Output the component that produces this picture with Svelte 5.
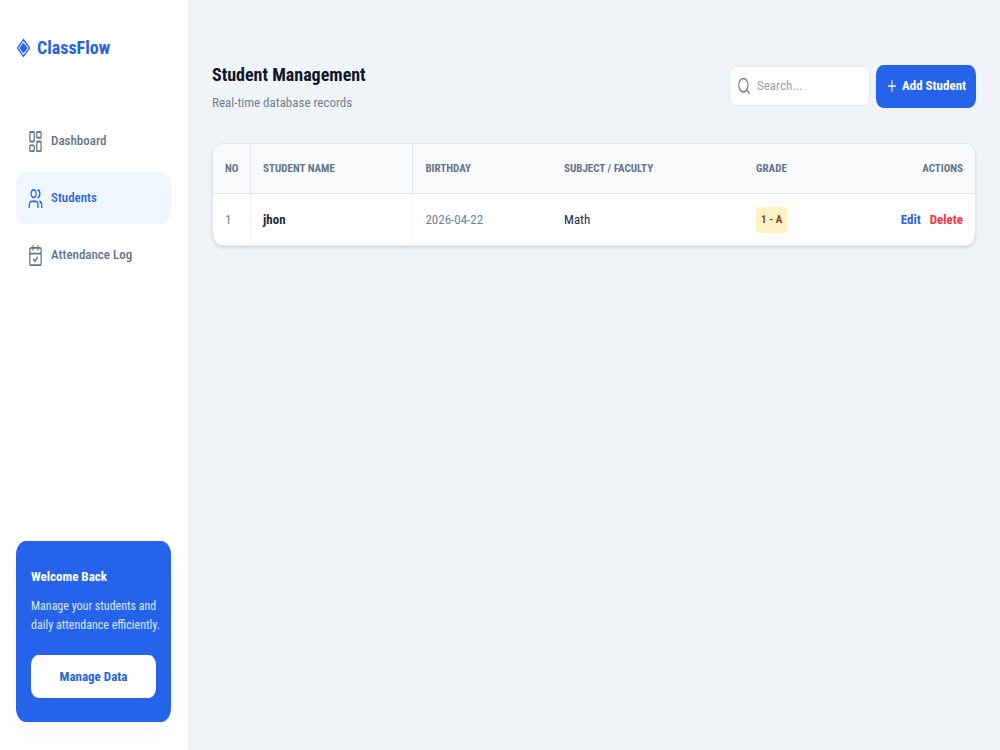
<script lang="ts">
  type Student = {
    id: number;
    name: string;
    birthday: string;
    subject: string;
    grade: string;
  };

  const navItems = [
    { id: 'dashboard', label: 'Dashboard' },
    { id: 'students', label: 'Students' },
    { id: 'attendance', label: 'Attendance Log' }
  ];

  let students: Student[] = [
    { id: 1, name: 'jhon', birthday: '2026-04-22', subject: 'Math', grade: '1 - A' }
  ];

  let current = 'students';
  let search = '';

  $: filtered = students.filter(s => s.name.toLowerCase().includes(search.toLowerCase()));

  function removeStudent(id: number) {
    students = students.filter(s => s.id !== id);
  }
</script>

<div class="layout">
  <aside class="sidebar">
    <div class="brand">
      <svg class="brand-icon" viewBox="0 0 24 24" preserveAspectRatio="none" aria-hidden="true">
        <path d="M12 2 21.5 12 12 22 2.5 12Z" />
        <path d="M12 7 Q15 9 17 12 Q15 15 12 17 Q9 15 7 12 Q9 9 12 7Z" fill="currentColor" />
      </svg>
      <span>ClassFlow</span>
    </div>

    <nav>
      {#each navItems as item}
        <a
          href="#{item.id}"
          class="nav-link"
          class:active={current === item.id}
          on:click={() => (current = item.id)}
        >
          <svg class="nav-icon" viewBox="0 0 24 24" preserveAspectRatio="none" aria-hidden="true">
            {#if item.id === 'dashboard'}
              <rect x="3" y="2" width="7" height="10" rx="1" />
              <rect x="14" y="2" width="7" height="6" rx="1" />
              <rect x="14" y="12" width="7" height="10" rx="1" />
              <rect x="3" y="16" width="7" height="6" rx="1" />
            {:else if item.id === 'students'}
              <path d="M16 21v-2a4 4 0 0 0-4-4H6a4 4 0 0 0-4 4v2" />
              <circle cx="9" cy="7" r="4" />
              <path d="M22 21v-2a4 4 0 0 0-3-3.87" />
              <path d="M16 3.13a4 4 0 0 1 0 7.75" />
            {:else}
              <path d="M8 2v4M16 2v4M3 10h18" />
              <rect x="3" y="4" width="18" height="18" rx="2" />
              <path d="m9 16 2 2 4-4" />
            {/if}
          </svg>
          <span>{item.label}</span>
        </a>
      {/each}
    </nav>

    <div class="welcome">
      <h2>Welcome Back</h2>
      <p>Manage your students and<br />daily attendance efficiently.</p>
      <button class="manage-btn" type="button">Manage Data</button>
    </div>
  </aside>

  <main>
    <header>
      <div>
        <h1>Student Management</h1>
        <p class="subtitle">Real-time database records</p>
      </div>

      <div class="tools">
        <label class="search">
          <svg class="search-icon" viewBox="0 0 24 24" preserveAspectRatio="none" aria-hidden="true">
            <circle cx="11" cy="11" r="8" />
            <path d="m21 21-4.3-4.3" />
          </svg>
          <input type="text" placeholder="Search..." aria-label="Search students" bind:value={search} />
        </label>
        <button class="add-btn" type="button">
          <svg class="plus-icon" viewBox="0 0 24 24" preserveAspectRatio="none" aria-hidden="true">
            <path d="M5 12h14M12 5v14" />
          </svg>
          Add Student
        </button>
      </div>
    </header>

    <div class="table-card">
      <table>
        <thead>
          <tr>
            <th class="col-no ruled">No</th>
            <th class="col-name ruled">Student Name</th>
            <th class="col-birthday">Birthday</th>
            <th class="col-subject">Subject / Faculty</th>
            <th class="col-grade">Grade</th>
            <th class="actions">Actions</th>
          </tr>
        </thead>
        <tbody>
          {#each filtered as student, i (student.id)}
            <tr>
              <td class="muted ruled">{i + 1}</td>
              <td class="name ruled">{student.name}</td>
              <td class="muted">{student.birthday}</td>
              <td>{student.subject}</td>
              <td><span class="badge">{student.grade}</span></td>
              <td class="actions">
                <button class="edit" type="button">Edit</button>
                <button class="delete" type="button" on:click={() => removeStudent(student.id)}>Delete</button>
              </td>
            </tr>
          {/each}
        </tbody>
      </table>
    </div>
  </main>
</div>

<style>
  :global(body) {
    background: #f0f4f9;
  }

  .layout,
  .layout * {
    box-sizing: border-box;
  }

  .layout {
    display: flex;
    min-height: 100vh;
    font-family: 'Roboto Condensed', 'Liberation Sans Narrow', Roboto, sans-serif;
    font-size: 13px;
    line-height: 20px;
    color: #1e293b;
  }

  h1,
  h2,
  p {
    margin: 0;
  }

  button,
  input {
    font: inherit;
  }

  button {
    border: none;
    cursor: pointer;
  }

  svg {
    flex-shrink: 0;
    fill: none;
    stroke: currentColor;
    stroke-width: 2;
    stroke-linecap: round;
    stroke-linejoin: round;
  }

  .sidebar {
    display: flex;
    flex-direction: column;
    flex-shrink: 0;
    width: 188px;
    padding: 32px 17px 28px 16px;
    background: #ffffff;
  }

  .brand {
    display: flex;
    align-items: center;
    gap: 6px;
    height: 32px;
    margin-bottom: 51px;
    font-size: 18px;
    font-weight: 700;
    color: #2563eb;
  }

  .brand-icon {
    width: 15px;
    height: 20px;
    stroke-linejoin: miter;
  }

  nav {
    display: flex;
    flex-direction: column;
    gap: 5px;
  }

  .nav-link {
    display: flex;
    align-items: center;
    gap: 8px;
    height: 52px;
    padding: 0 12px;
    border-radius: 10px / 14px;
    font-weight: 500;
    color: #64748b;
    text-decoration: none;
  }

  .nav-link.active {
    background: #eff6ff;
    color: #2563eb;
  }

  .nav-icon {
    width: 15px;
    height: 23px;
  }

  .welcome {
    margin-top: auto;
    padding: 26px 15px 24px;
    border-radius: 10px / 14px;
    background: #2563eb;
    color: #ffffff;
    box-shadow: 0 10px 20px rgba(37, 99, 235, 0.06);
  }

  .welcome h2 {
    margin-bottom: 10px;
    font-size: 13px;
    font-weight: 700;
  }

  .welcome p {
    margin-bottom: 20px;
    font-size: 12px;
    line-height: 19px;
    color: #dbe6fd;
    white-space: nowrap;
  }

  .manage-btn {
    width: 100%;
    height: 43px;
    border-radius: 7px / 10px;
    background: #ffffff;
    font-weight: 700;
    color: #2563eb;
  }

  main {
    flex: 1;
    min-width: 0;
    padding: 59px 24px;
  }

  header {
    display: flex;
    justify-content: space-between;
    align-items: center;
    margin-bottom: 30px;
  }

  h1 {
    margin-bottom: 3px;
    font-size: 18px;
    line-height: 31px;
    color: #0f172a;
  }

  .subtitle {
    color: #718096;
  }

  .tools {
    display: flex;
    align-items: center;
    gap: 6px;
  }

  .search {
    display: flex;
    align-items: center;
    gap: 6px;
    width: 141px;
    height: 40px;
    padding: 0 7px;
    border: 1px solid #e2e8f0;
    border-radius: 6px / 9px;
    background: #ffffff;
    color: #718096;
  }

  .search input {
    width: 100%;
    min-width: 0;
    padding: 0;
    border: none;
    outline: none;
    background: transparent;
    color: #1e293b;
  }

  .search input::placeholder {
    color: #9ca3af;
  }

  .search-icon {
    width: 14px;
    height: 20px;
  }

  .add-btn {
    display: flex;
    align-items: center;
    justify-content: center;
    gap: 4px;
    width: 100px;
    height: 43px;
    padding: 0;
    border-radius: 7px / 10px;
    background: #2563eb;
    font-weight: 700;
    color: #ffffff;
    white-space: nowrap;
  }

  .plus-icon {
    width: 12px;
    height: 18px;
  }

  .table-card {
    overflow: hidden;
    border: 1px solid #e2e8f0;
    border-radius: 10px / 14px;
    background: #ffffff;
    box-shadow: 0 2px 3px rgba(15, 23, 42, 0.12);
  }

  table {
    width: 100%;
    table-layout: fixed;
    border-collapse: separate;
    border-spacing: 0;
  }

  th,
  td {
    height: 51px;
    padding: 0 12px;
    text-align: left;
    white-space: nowrap;
  }

  th {
    height: 50px;
    border-bottom: 1px solid #e2e8f0;
    background: #f8fafc;
    font-size: 11px;
    font-weight: 700;
    text-transform: uppercase;
    color: #64748b;
  }

  .ruled {
    border-right: 1px solid #f1f5f9;
  }

  th.ruled {
    border-right-color: #e2e8f0;
  }

  .col-no {
    width: 5%;
  }

  .col-name {
    width: 21.3%;
  }

  .col-birthday {
    width: 18.2%;
  }

  .col-subject {
    width: 25.2%;
  }

  .col-grade {
    width: 12%;
  }

  .muted {
    color: #718096;
  }

  .name {
    font-weight: 700;
  }

  .badge {
    display: inline-block;
    padding: 3px 5px;
    border-radius: 3px;
    background: #fef3c7;
    font-size: 11px;
    font-weight: 700;
    color: #92400e;
  }

  .actions {
    text-align: right;
  }

  .actions button {
    padding: 0;
    background: none;
    font-weight: 700;
  }

  .edit {
    margin-right: 6px;
    color: #2563eb;
  }

  .delete {
    color: #ff3040;
  }
</style>
